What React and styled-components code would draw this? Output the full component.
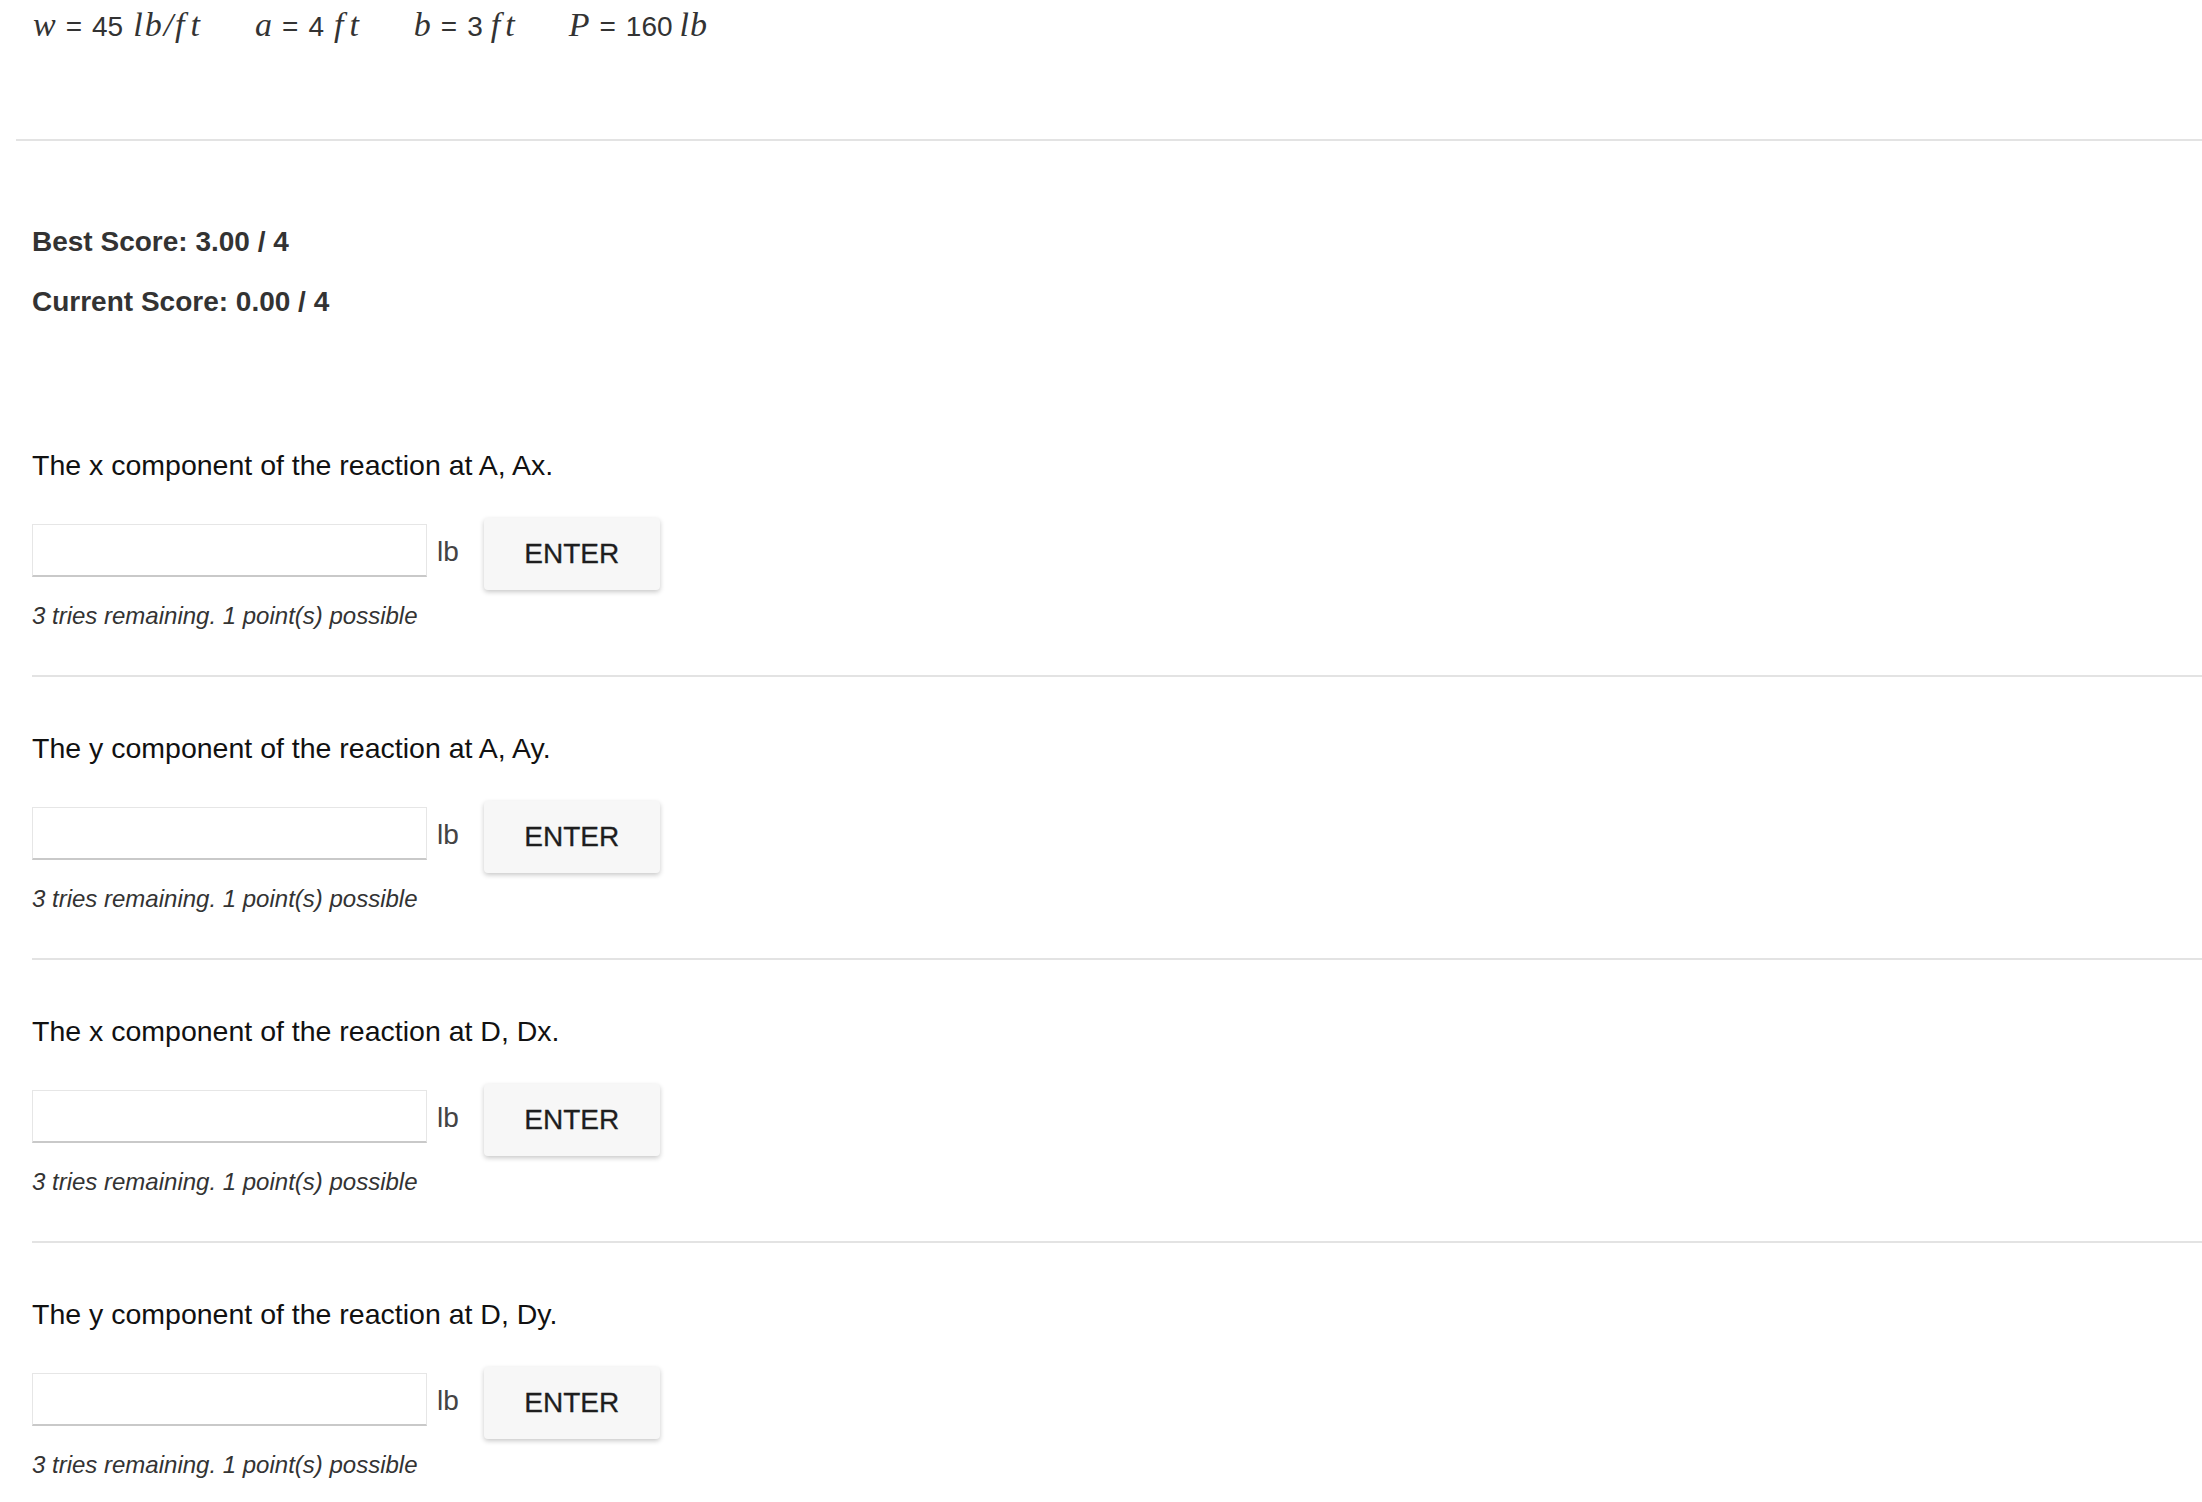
import React from 'react';
import styled, { createGlobalStyle } from 'styled-components';

const sans = '"Liberation Sans", Helvetica, Arial, sans-serif';
const serif = '"Liberation Serif", "Times New Roman", serif';
const rule = '#e3e3e3';

const GlobalStyle = createGlobalStyle`
  html, body {
    margin: 0;
    padding: 0;
    background: #ffffff;
  }
  body {
    font-family: ${sans};
    color: #222;
  }
`;

const PageSC = styled.div`
  padding-left: 16px;
  min-height: 1502px;
  box-sizing: border-box;
`;

const MathRowSC = styled.div`
  display: flex;
  align-items: baseline;
  gap: 49px;
  padding-left: 17px;
  height: 50px;
  line-height: 50px;
  font-size: 28px;
  color: #333;
`;

const EqSC = styled.span`
  display: inline-flex;
  align-items: baseline;
  white-space: nowrap;
`;

const VarSC = styled.span`
  font-family: ${serif};
  font-style: italic;
  font-size: 34px;
  letter-spacing: ${(p) => p.spacing || '0px'};
`;

const OpSC = styled.span`
  margin: 0 10px;
`;

const NumSC = styled.span`
  margin-right: ${(p) => p.gap || '8px'};
`;

const DividerSC = styled.div`
  height: 2px;
  background: ${rule};
  margin-top: ${(p) => p.top || '0px'};
`;

const ScoresSC = styled.div`
  display: flex;
  flex-direction: column;
  gap: 20.5px;
  padding-left: 16px;
  margin-top: 80.5px;
  margin-bottom: 123px;
`;

const ScoreSC = styled.div`
  font-size: 28px;
  line-height: 40px;
  font-weight: bold;
  color: #333;
`;

const QuestionsSC = styled.div`
  padding-left: 16px;
`;

const QuestionSC = styled.div`
  padding-top: ${(p) => (p.first ? '0px' : '51px')};
`;

const PromptSC = styled.p`
  margin: 0;
  font-size: 28.5px;
  line-height: 40px;
  color: #111;
`;

const AnswerRowSC = styled.div`
  display: flex;
  align-items: flex-start;
  margin-top: 33px;
  height: 72px;
`;

const InputSC = styled.input`
  width: 395px;
  height: 53px;
  box-sizing: border-box;
  margin-top: 6px;
  border: 1px solid #e6e6e6;
  border-bottom: 2px solid #c9c9c9;
  background: #fff;
  outline: none;
  font-family: ${sans};
  font-size: 28px;
  padding: 0 12px;
`;

const UnitSC = styled.span`
  margin-left: 10px;
  font-size: 28px;
  line-height: 68px;
  color: #444;
`;

const EnterBtnSC = styled.button`
  margin-left: 25px;
  width: 176px;
  height: 72px;
  border: none;
  border-radius: 4px;
  background: #f7f7f7;
  box-shadow: 0 2px 5px rgba(0, 0, 0, 0.22);
  font-family: ${sans};
  font-size: 28px;
  font-weight: 500;
  color: #1e1e1e;
  -webkit-text-stroke: 0.3px #1e1e1e;
  cursor: pointer;
`;

const TriesSC = styled.p`
  margin: 9px 0 0;
  font-size: 24px;
  line-height: 34px;
  font-style: italic;
  color: #333;
`;

const questions = [
  'The x component of the reaction at A, Ax.',
  'The y component of the reaction at A, Ay.',
  'The x component of the reaction at D, Dx.',
  'The y component of the reaction at D, Dy.'
];

const Question = ({ text, first, last }) => (
  <QuestionSC first={first}>
    <PromptSC>{text}</PromptSC>
    <AnswerRowSC>
      <InputSC type="text" />
      <UnitSC>lb</UnitSC>
      <EnterBtnSC>ENTER</EnterBtnSC>
    </AnswerRowSC>
    <TriesSC>3 tries remaining. 1 point(s) possible</TriesSC>
    {!last && <DividerSC top="42px" />}
  </QuestionSC>
);

export default function App() {
  return (
    <>
      <GlobalStyle />
      <PageSC>
        <MathRowSC>
          <EqSC>
            <VarSC>w</VarSC>
            <OpSC>=</OpSC>
            <NumSC gap="10px">45</NumSC>
            <VarSC spacing="2px">lb/</VarSC>
            <VarSC spacing="6px">ft</VarSC>
          </EqSC>
          <EqSC>
            <VarSC>a</VarSC>
            <OpSC>=</OpSC>
            <NumSC gap="10px">4</NumSC>
            <VarSC spacing="6px">ft</VarSC>
          </EqSC>
          <EqSC>
            <VarSC>b</VarSC>
            <OpSC>=</OpSC>
            <NumSC gap="8px">3</NumSC>
            <VarSC spacing="5px">ft</VarSC>
          </EqSC>
          <EqSC>
            <VarSC>P</VarSC>
            <OpSC>=</OpSC>
            <NumSC gap="7px">160</NumSC>
            <VarSC spacing="1px">lb</VarSC>
          </EqSC>
        </MathRowSC>
        <DividerSC top="89px" />
        <ScoresSC>
          <ScoreSC>Best Score: 3.00 / 4</ScoreSC>
          <ScoreSC>Current Score: 0.00 / 4</ScoreSC>
        </ScoresSC>
        <QuestionsSC>
          {questions.map((q, i) => (
            <Question key={q} text={q} first={i === 0} last={i === questions.length - 1} />
          ))}
        </QuestionsSC>
      </PageSC>
    </>
  );
}
